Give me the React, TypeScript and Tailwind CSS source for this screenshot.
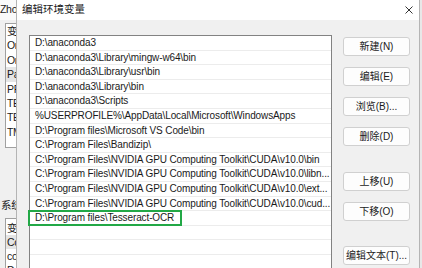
const paths = [
  "D:\\anaconda3",
  "D:\\anaconda3\\Library\\mingw-w64\\bin",
  "D:\\anaconda3\\Library\\usr\\bin",
  "D:\\anaconda3\\Library\\bin",
  "D:\\anaconda3\\Scripts",
  "%USERPROFILE%\\AppData\\Local\\Microsoft\\WindowsApps",
  "D:\\Program files\\Microsoft VS Code\\bin",
  "C:\\Program Files\\Bandizip\\",
  "C:\\Program Files\\NVIDIA GPU Computing Toolkit\\CUDA\\v10.0\\bin",
  "C:\\Program Files\\NVIDIA GPU Computing Toolkit\\CUDA\\v10.0\\libn...",
  "C:\\Program Files\\NVIDIA GPU Computing Toolkit\\CUDA\\v10.0\\ext...",
  "C:\\Program Files\\NVIDIA GPU Computing Toolkit\\CUDA\\v10.0\\cud...",
  "D:\\Program files\\Tesseract-OCR",
  "",
  "",
  "",
]

const userVars = ["变量", "OneDrive", "OneDriveConsumer", "Path", "PROCESSOR", "TEMP", "TEMP", "TMP"]
const sysVars = ["变量", "ComSpec", "configsetroot", "DriverData"]

const Btn = ({ label }: { label: string }) => (
  <button className="h-[19px] w-[67px] rounded-[3px] border border-[#d0d0d0] bg-[#fdfdfd] text-[10px] text-[#1a1a1a] leading-none whitespace-nowrap px-0">
    {label}
  </button>
)

const BackWindow = () => (
  <div className="w-[16px] shrink-0 overflow-hidden bg-[#f0f0f0] text-[10.5px] tracking-[-0.3px]">
    <div className="h-[20px] bg-[#fafafa] flex items-center whitespace-nowrap">Zhong 的用户变量</div>
    <div className="ml-[5px] mt-[3px] w-[200px] h-[125px] border border-[#a0a0a0] bg-white">
      {userVars.map((v, i) => (
        <div key={i} className={`h-[14.4px] pl-[1px] leading-[14.4px] whitespace-nowrap ${i === 3 ? "bg-[#e5e5e5]" : ""}`}>{v}</div>
      ))}
    </div>
    <div className="mt-[50px] ml-[1px] whitespace-nowrap">系统变量(S)</div>
    <div className="ml-[5px] mt-[4px] w-[200px] h-[80px] border border-[#a0a0a0] bg-white pt-[2px]">
      {sysVars.map((v, i) => (
        <div key={i} className={`h-[14px] pl-[1px] leading-[14px] whitespace-nowrap ${i === 1 ? "bg-[#e5e5e5]" : ""}`}>{v}</div>
      ))}
    </div>
  </div>
)

const App = () => {
  return (
    <div className="w-[422px] h-[268px] overflow-hidden flex bg-[#f0f0f0] text-[10px] text-[#1a1a1a] font-['Liberation_Sans','Noto_Sans_CJK_SC',sans-serif]">
      <BackWindow />
      <div className="w-[404px] shrink-0 h-full flex flex-col border-x border-[#b4b4b4] bg-[#f0f0f0]">
        <div className="h-[20px] shrink-0 bg-white flex items-center justify-between pl-[5px] pr-[6px]">
          <span className="text-[10.5px]">编辑环境变量</span>
          <svg width="8" height="8" viewBox="0 0 8 8">
            <path d="M0.5 0.5 L7.5 7.5 M7.5 0.5 L0.5 7.5" stroke="#333" strokeWidth="1" />
          </svg>
        </div>
        <div className="flex pl-[12px] pt-[15px]">
          <div className="w-[303px] h-[240px] border border-[#828282] bg-white">
            {paths.map((p, i) => (
              <div key={i} className="h-[14.6px] border-b border-[#ececec] pl-[5px] leading-[14px] tracking-[-0.12px] whitespace-nowrap overflow-hidden">
                {p}
              </div>
            ))}
          </div>
          <div className="ml-[11px] mt-[2px] flex flex-col">
            <div className="flex flex-col gap-[11px]">
              <Btn label="新建(N)" />
              <Btn label="编辑(E)" />
              <Btn label="浏览(B)..." />
              <Btn label="删除(D)" />
            </div>
            <div className="mt-[26px] flex flex-col gap-[11px]">
              <Btn label="上移(U)" />
              <Btn label="下移(O)" />
            </div>
            <div className="mt-[25px]">
              <Btn label="编辑文本(T)..." />
            </div>
          </div>
        </div>
      </div>
      <div className="flex-1 bg-[#e8e8e8]" />
      <div className="absolute left-[28px] top-[210px] w-[154px] h-[16px] border-2 border-[#22a846] pointer-events-none" />
    </div>
  )
}

export default App
